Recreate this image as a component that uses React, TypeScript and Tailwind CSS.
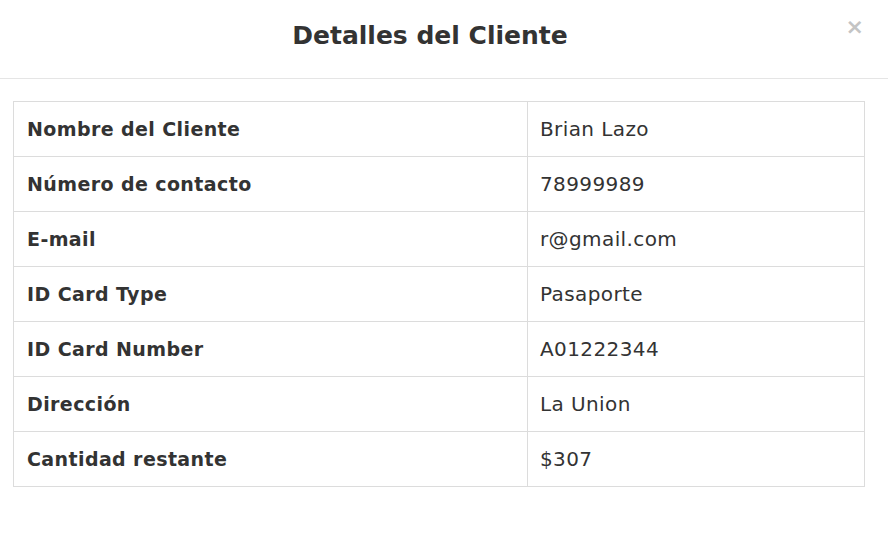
const ROWS = [
  ["Nombre del Cliente", "Brian Lazo"],
  ["Número de contacto", "78999989"],
  ["E-mail", "r@gmail.com"],
  ["ID Card Type", "Pasaporte"],
  ["ID Card Number", "A01222344"],
  ["Dirección", "La Union"],
  ["Cantidad restante", "$307"],
];

export default function App() {
  return (
    <div
      className="w-[888px] h-[534px] bg-white text-[#333]"
      style={{ fontFamily: '"DejaVu Sans", "Open Sans", sans-serif' }}
    >
      {/* Header */}
      <div className="relative h-[79px] border-b border-[#e5e5e5] flex items-center justify-center pr-[28px] pb-[6px]">
        <h4 className="text-[25px] font-bold text-[#333]">Detalles del Cliente</h4>
        <button className="absolute right-[24px] top-[16px] text-[22px] font-bold leading-none text-[#c4c4c4]">
          ×
        </button>
      </div>

      {/* Body */}
      <div className="px-[13px] pt-[22px]">
        <table className="w-[852px] border-collapse border border-[#dcdcdc]">
          <tbody>
            {ROWS.map(([label, value]) => (
              <tr key={label} className="h-[55px]">
                <td className="w-[514px] border border-[#dcdcdc] pl-[13px] text-[19px] font-bold tracking-[0.4px]">
                  {label}
                </td>
                <td className="border border-[#dcdcdc] pl-[12px] text-[20px] tracking-[0.4px]">{value}</td>
              </tr>
            ))}
          </tbody>
        </table>
      </div>
    </div>
  );
}
